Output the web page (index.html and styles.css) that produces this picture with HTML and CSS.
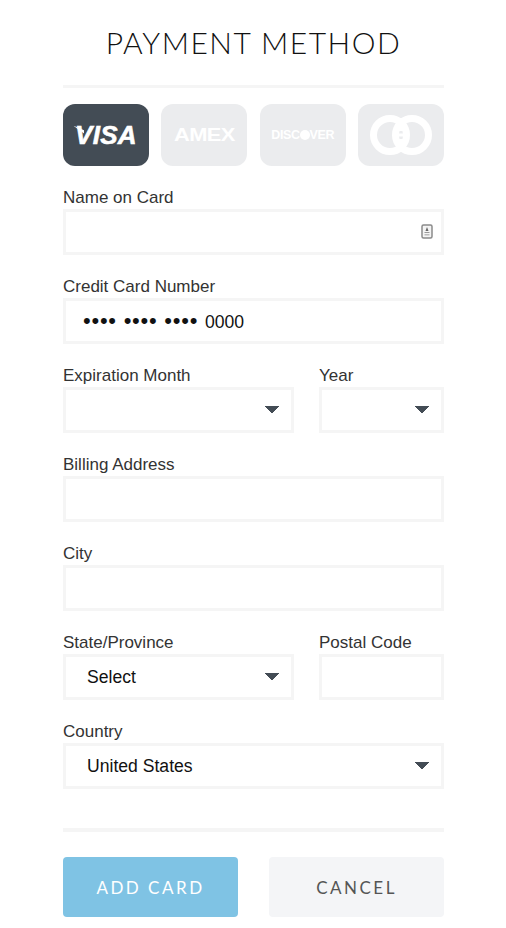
FILE: index.html
```html
<!DOCTYPE html>
<html lang="en">
<head>
  <meta charset="UTF-8">
  <title>Payment Method</title>
  <meta name="viewport" content="width=device-width, initial-scale=1.0">
  <link rel="stylesheet" href="styles.css">
</head>
<body>

<form class="payment">
  <h1>PAYMENT METHOD</h1>

  <div class="cards">
    <button type="button" class="card active"><span class="visa">VISA</span></button>
    <button type="button" class="card"><span class="amex">AMEX</span></button>
    <button type="button" class="card"><span class="discover">DISC<i class="dot"></i>VER</span></button>
    <button type="button" class="card">
      <svg width="62" height="40" viewBox="0 0 62 40">
        <circle cx="20" cy="20" r="16.5" fill="none" stroke="#fff" stroke-width="7"/>
        <circle cx="42" cy="20" r="16.5" fill="none" stroke="#fff" stroke-width="7"/>
        <path d="M27 20h8M27 14.5h8M27 25.5h8" stroke="#fff" stroke-width="3"/>
      </svg>
    </button>
  </div>

  <div class="form-group">
    <label for="name">Name on Card</label>
    <div class="with-icon">
      <input type="text" id="name">
      <svg class="contact-icon" width="12" height="15" viewBox="0 0 12 15">
        <rect x="1" y="1" width="10" height="13" rx="1.5" fill="#f4f4f4" stroke="#8a8a8a" stroke-width="1.5"/>
        <path d="M6 3l1.5 4h-3z" fill="#666"/>
        <rect x="3.5" y="8" width="5" height="1" fill="#999"/>
        <rect x="3.5" y="10" width="5" height="1.5" fill="#bbb"/>
      </svg>
    </div>
  </div>

  <div class="form-group">
    <label for="number">Credit Card Number</label>
    <div class="field" id="number"><span class="dots">&bull;&bull;&bull;&bull; &bull;&bull;&bull;&bull; &bull;&bull;&bull;&bull; </span>0000</div>
  </div>

  <div class="form-row">
    <div class="form-group grow">
      <label for="month">Expiration Month</label>
      <select id="month"><option></option></select>
    </div>
    <div class="form-group side">
      <label for="year">Year</label>
      <select id="year"><option></option></select>
    </div>
  </div>

  <div class="form-group">
    <label for="address">Billing Address</label>
    <input type="text" id="address">
  </div>

  <div class="form-group">
    <label for="city">City</label>
    <input type="text" id="city">
  </div>

  <div class="form-row">
    <div class="form-group grow">
      <label for="state">State/Province</label>
      <select id="state"><option>Select</option></select>
    </div>
    <div class="form-group side">
      <label for="postal">Postal Code</label>
      <input type="text" id="postal">
    </div>
  </div>

  <div class="form-group">
    <label for="country">Country</label>
    <select id="country"><option>United States</option></select>
  </div>

  <div class="actions">
    <button type="button" class="btn primary">ADD CARD</button>
    <button type="button" class="btn">CANCEL</button>
  </div>
</form>

</body>
</html>
```

FILE: styles.css
```css
body {
  margin: 0;
  background: #fff;
  color: #333;
  font-family: "Liberation Sans", Arial, sans-serif;
}

.payment {
  width: 381px;
  margin: 0 auto;
  padding: 0 62px 11px 63px;
}

h1 {
  margin: 0;
  padding: 23px 0 24px;
  border-bottom: 3px solid #f5f5f5;
  font-family: Lato, sans-serif;
  font-size: 30px;
  font-weight: 300;
  line-height: 38px;
  letter-spacing: 1.5px;
  text-align: center;
  color: #111;
}

.cards {
  display: flex;
  justify-content: space-between;
  margin: 16px 0 21px;
}

.card {
  width: 86px;
  height: 62px;
  padding: 0;
  border: none;
  border-radius: 12px;
  background: #ebecee;
  color: #fff;
  display: flex;
  align-items: center;
  justify-content: center;
}

.card.active {
  background: #434c55;
}

.visa {
  position: relative;
  font-family: "Liberation Sans", sans-serif;
  font-size: 26px;
  font-weight: bold;
  font-style: italic;
  letter-spacing: 0.3px;
  -webkit-text-stroke: 0.6px #fff;
}

/* swoosh on the V */
.visa::before {
  content: "";
  position: absolute;
  top: 6px;
  left: -2px;
  width: 11px;
  height: 8px;
  background: #fff;
  clip-path: polygon(0 0, 100% 60%, 100% 100%);
}

.amex {
  font-family: "Liberation Sans", sans-serif;
  font-size: 19px;
  font-weight: bold;
  letter-spacing: -0.5px;
  transform: scaleX(1.15);
}

.discover {
  display: flex;
  align-items: center;
  font-family: "Liberation Sans", sans-serif;
  font-size: 12.5px;
  font-weight: bold;
  letter-spacing: -0.4px;
}

.dot {
  width: 10px;
  height: 10px;
  border-radius: 50%;
  background: #fff;
}

.form-group {
  margin-bottom: 21px;
}

label {
  display: block;
  height: 22px;
  font-size: 17px;
  line-height: 22px;
  color: #333;
}

input, select, .field {
  display: block;
  width: 100%;
  height: 46px;
  box-sizing: border-box;
  padding: 0 21px;
  border: 3px solid #f5f5f5;
  border-radius: 0;
  outline: none;
  background-color: #fff;
  font-family: "Liberation Sans", Arial, sans-serif;
  font-size: 17.6px;
  color: #111;
}

.field {
  padding-left: 17px;
  line-height: 40px;
}

.dots {
  font-size: 22px;
  letter-spacing: 0.75px;
}

select {
  appearance: none;
  background-image: linear-gradient(to top right, transparent 50%, #434c55 50%), linear-gradient(to top left, transparent 50%, #434c55 50%);
  background-size: 7px 8px;
  background-position: calc(100% - 19px) 50%, calc(100% - 12px) 50%;
  background-repeat: no-repeat;
}

.with-icon {
  position: relative;
}

.contact-icon {
  position: absolute;
  top: 15px;
  right: 11px;
}

.form-row {
  display: flex;
  gap: 25px;
}

.grow {
  flex: 1;
}

.side {
  width: 125px;
}

.actions {
  display: flex;
  justify-content: space-between;
  margin-top: 39px;
  padding-top: 25px;
  border-top: 4px solid #f5f5f5;
}

.btn {
  width: 175px;
  height: 60px;
  border: none;
  border-radius: 4px;
  background: #f4f5f7;
  color: #555;
  font-family: Lato, sans-serif;
  font-size: 17px;
  letter-spacing: 2.5px;
}

.btn.primary {
  background: #7fc3e4;
  color: #fff;
}
```
